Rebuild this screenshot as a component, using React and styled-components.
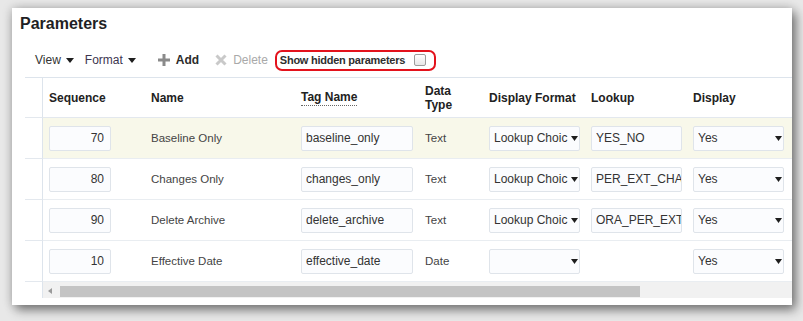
import React from 'react';
import styled, { createGlobalStyle } from 'styled-components';

const GlobalStyle = createGlobalStyle`
  html, body {
    margin: 0;
    padding: 0;
  }
  body {
    width: 803px;
    height: 321px;
    overflow: hidden;
    background: #e8e8e8;
    font-family: "Liberation Sans", Arial, sans-serif;
    color: #333333;
  }
  * {
    box-sizing: border-box;
  }
`;

const Page = styled.div`
  padding: 8px 0 0 12px;
`;

const Panel = styled.section`
  width: 780px;
  height: 297px;
  background: #ffffff;
  overflow: hidden;
  box-shadow: 4px 5px 10px rgba(0, 0, 0, 0.45), 0 0 10px rgba(0, 0, 0, 0.2);
`;

const Title = styled.h1`
  margin: 0;
  height: 40px;
  padding: 7px 0 0 8px;
  font-size: 16px;
  line-height: 18px;
  font-weight: bold;
  color: #1f1f24;
`;

const Toolbar = styled.div`
  display: flex;
  align-items: center;
  height: 24px;
  margin: 0 0 5px 23px;
  font-size: 12px;
`;

const MenuButton = styled.div`
  display: flex;
  align-items: center;
  gap: 5px;
  margin-right: ${(p) => p.$after || 0}px;
  color: ${(p) => p.$color || '#333'};
`;

const ActionButton = styled.div`
  display: flex;
  align-items: center;
  gap: 6px;
  margin-right: ${(p) => p.$after || 0}px;
  font-weight: ${(p) => (p.$disabled ? 'normal' : 'bold')};
  color: ${(p) => (p.$disabled ? '#a9a9a9' : '#2b2b2b')};
`;

const HiddenToggle = styled.label`
  display: flex;
  align-items: center;
  height: 21px;
  padding: 0 8px 0 3px;
  border: 2px solid #e3121c;
  border-radius: 7px;
  font-size: 11px;
  font-weight: bold;
  letter-spacing: -0.25px;
  color: #2f2f2f;
`;

const CheckBox = styled.span`
  width: 12px;
  height: 12px;
  margin-left: 9px;
  border: 1px solid #9c9c9c;
  border-radius: 2px;
  background: linear-gradient(#ffffff, #e6e6e6);
`;

const Table = styled.div`
  margin-left: 13px;
  width: 767px;
`;

const Row = styled.div`
  display: grid;
  grid-template-columns: 18px 102px 150px 124px 64px 102px 102px 105px;
  height: ${(p) => p.$height || 41}px;
  border-top: ${(p) => (p.$first ? '1px solid #dde4ec' : 'none')};
`;

const RowHead = styled.div`
  border-right: 1px solid #dde4ec;
  border-bottom: 1px solid #e3e8ee;
`;

const HeadCell = styled.div`
  display: flex;
  align-items: center;
  padding-left: 6px;
  border-bottom: 1px solid #e3e8ee;
  font-size: 12px;
  line-height: 14px;
  font-weight: bold;
  color: #222;
`;

const Dotted = styled.span`
  border-bottom: 1px dotted #666;
  padding-bottom: 1px;
`;

const Cell = styled.div`
  display: flex;
  align-items: center;
  padding-left: 6px;
  border-bottom: 1px solid #e9edf1;
  background: ${(p) => (p.$selected ? '#f8f8ea' : '#ffffff')};
  font-size: 11.5px;
  color: #444;
  white-space: nowrap;
  overflow: hidden;
`;

const Field = styled.input`
  width: ${(p) => p.$w}px;
  height: 25px;
  padding: 0 ${(p) => (p.$right ? 6 : 0)}px 0 ${(p) => (p.$right ? 4 : 4)}px;
  border: 1px solid #dfe4ea;
  border-radius: 2px;
  background: #fbfcfe;
  font-family: "Liberation Sans", Arial, sans-serif;
  font-size: 12px;
  color: #333;
  text-align: ${(p) => (p.$right ? 'right' : 'left')};
  outline: none;
`;

const Select = styled.div`
  display: flex;
  align-items: center;
  gap: 3px;
  width: 91px;
  height: 25px;
  padding: 0 0 0 4px;
  border: 1px solid #dfe4ea;
  border-radius: 2px;
  background: #fbfcfe;
  font-size: 12px;
  color: #333;
`;

const SelectText = styled.span`
  width: 74px;
  overflow: hidden;
  white-space: nowrap;
`;

const ScrollTrack = styled.div`
  position: relative;
  display: flex;
  align-items: flex-end;
  padding: 0 0 1px 17px;
  background: #f1f1f1;
  grid-column: 2 / -1;
`;

const ScrollThumb = styled.div`
  width: 580px;
  height: 11px;
  background: #c4c4c4;
`;

const ScrollArrow = styled.svg`
  position: absolute;
  left: 5px;
  top: 6px;
`;

const ScrollHead = styled.div`
  border-right: 1px solid #dde4ec;
`;

const Caret = ({ w = 8, h = 5, color = '#1e1e1e' }) => (
  <svg width={w} height={h} viewBox={`0 0 ${w} ${h}`}>
    <polygon points={`0,0 ${w},0 ${w / 2},${h}`} fill={color} />
  </svg>
);

const PlusIcon = () => (
  <svg width="12" height="12" viewBox="0 0 12 12">
    <path d="M4.5 0h3v4.5H12v3H7.5V12h-3V7.5H0v-3h4.5z" fill="#8a8a8a" />
  </svg>
);

const CrossIcon = () => (
  <svg width="12" height="12" viewBox="0 0 12 12">
    <path d="M1.5 1.5L10.5 10.5M10.5 1.5L1.5 10.5" stroke="#c9c9c9" strokeWidth="3" />
  </svg>
);

const rows = [
  { seq: '70', name: 'Baseline Only', tag: 'baseline_only', type: 'Text', format: 'Lookup Choic', lookup: 'YES_NO', display: 'Yes' },
  { seq: '80', name: 'Changes Only', tag: 'changes_only', type: 'Text', format: 'Lookup Choic', lookup: 'PER_EXT_CHA', display: 'Yes' },
  { seq: '90', name: 'Delete Archive', tag: 'delete_archive', type: 'Text', format: 'Lookup Choic', lookup: 'ORA_PER_EXT', display: 'Yes' },
  { seq: '10', name: 'Effective Date', tag: 'effective_date', type: 'Date', format: '', lookup: null, display: 'Yes' },
];

const App = () => (
  <Page>
    <GlobalStyle />
    <Panel>
      <Title>Parameters</Title>
      <Toolbar>
        <MenuButton $after={11}>View <Caret /></MenuButton>
        <MenuButton $after={22} $color="#3d3550">Format <Caret /></MenuButton>
        <ActionButton $after={16}><PlusIcon />Add</ActionButton>
        <ActionButton $after={7} $disabled><CrossIcon />Delete</ActionButton>
        <HiddenToggle>
          Show hidden parameters
          <CheckBox />
        </HiddenToggle>
      </Toolbar>
      <Table>
        <Row $first>
          <RowHead />
          <HeadCell>Sequence</HeadCell>
          <HeadCell>Name</HeadCell>
          <HeadCell><Dotted>Tag Name</Dotted></HeadCell>
          <HeadCell>Data<br />Type</HeadCell>
          <HeadCell>Display Format</HeadCell>
          <HeadCell>Lookup</HeadCell>
          <HeadCell>Display</HeadCell>
        </Row>
        {rows.map((r, i) => (
          <Row key={`param-row-${i}`}>
            <RowHead />
            <Cell $selected={i === 0}><Field $w={62} $right readOnly value={r.seq} /></Cell>
            <Cell $selected={i === 0}>{r.name}</Cell>
            <Cell $selected={i === 0}><Field $w={112} readOnly value={r.tag} /></Cell>
            <Cell $selected={i === 0}>{r.type}</Cell>
            <Cell $selected={i === 0}>
              <Select><SelectText>{r.format}</SelectText><Caret w={7} h={5} /></Select>
            </Cell>
            <Cell $selected={i === 0}>
              {r.lookup !== null && <Field $w={91} readOnly value={r.lookup} />}
            </Cell>
            <Cell $selected={i === 0}>
              <Select><SelectText>{r.display}</SelectText><Caret w={7} h={5} /></Select>
            </Cell>
          </Row>
        ))}
        <Row $height={16}>
          <ScrollHead />
          <ScrollTrack>
            <ScrollArrow width="4" height="6" viewBox="0 0 4 6">
              <polygon points="4,0 4,6 0,3" fill="#9a9a9a" />
            </ScrollArrow>
            <ScrollThumb />
          </ScrollTrack>
        </Row>
      </Table>
    </Panel>
  </Page>
);

export default App;
